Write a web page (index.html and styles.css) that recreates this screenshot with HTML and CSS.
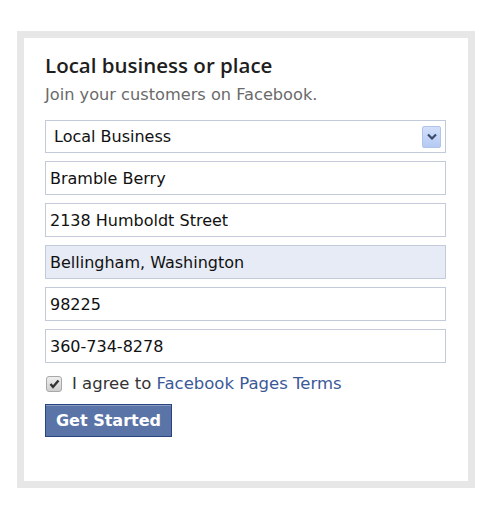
FILE: index.html
```html
<!DOCTYPE html>
<html>
<head>
<meta charset="utf-8">
<link rel="stylesheet" href="styles.css">
</head>
<body>
<div class="frame">
  <div class="panel">
    <h1 class="title">Local business or place</h1>
    <p class="subtitle">Join your customers on Facebook.</p>
    <div class="fields">
      <div class="field select">
        <span>Local Business</span>
        <span class="arrow"><svg width="10" height="7" viewBox="0 0 10 7"><path d="M1 1.5 L5 5.5 L9 1.5" fill="none" stroke="#3a4a6e" stroke-width="2.2"/></svg></span>
      </div>
      <div class="field">Bramble Berry</div>
      <div class="field">2138 Humboldt Street</div>
      <div class="field filled">Bellingham, Washington</div>
      <div class="field">98225</div>
      <div class="field">360-734-8278</div>
    </div>
    <label class="agree">
      <span class="check"><svg width="11" height="10" viewBox="0 0 11 10"><path d="M1.5 5 L4 8 L9.5 1.5" fill="none" stroke="#333" stroke-width="2.4"/></svg></span>
      <span>I agree to <a class="link">Facebook Pages Terms</a></span>
    </label>
    <button class="btn">Get Started</button>
  </div>
</div>
</body>
</html>
```
FILE: styles.css
```css
* { box-sizing: border-box; }
html, body { margin: 0; padding: 0; background: #fff; }
body { font-family: "DejaVu Sans", Tahoma, sans-serif; color: #222; }
.frame {
  margin: 31px 0 0 17px;
  width: 458px;
  height: 457px;
  border: 7px solid #e7e7e7;
  background: #fff;
}
.panel { padding: 13px 21px 0 21px; }
.title {
  margin: 0;
  font-family: "Open Sans", sans-serif;
  font-size: 20.5px;
  font-weight: 600;
  color: #1e1e1e;
  line-height: 28px;
}
.subtitle {
  margin: 6px 0 0 0;
  font-size: 16.2px;
  color: #6a6a6a;
  line-height: 20px;
}
.fields {
  margin-top: 15px;
  display: flex;
  flex-direction: column;
  gap: 8px;
  width: 401px;
}
.field {
  height: 34px;
  border: 1px solid #c3cbdb;
  padding: 0 4px;
  display: flex;
  align-items: center;
  font-size: 16px;
  color: #111;
  background: #fff;
}
.field.filled { background: #e6ebf5; }
.select { justify-content: space-between; padding-left: 8px; padding-right: 4px; height: 33px; }
.arrow {
  width: 19px; height: 22px;
  background: linear-gradient(#d3e0fb, #b5c9f2);
  border: 1px solid #b0c3ea;
  border-radius: 2px;
  display: flex; align-items: center; justify-content: center;
}
.agree {
  display: flex;
  align-items: center;
  gap: 10px;
  margin-top: 11px;
  font-size: 16.5px;
  color: #333;
}
.check {
  width: 16px; height: 16px;
  border: 1px solid #a8a8a8;
  border-radius: 3px;
  background: linear-gradient(#eee, #cfcfcf);
  display: flex; align-items: center; justify-content: center;
  margin-left: 1px;
}
.link { color: #3b5998; text-decoration: none; }
.btn {
  margin-top: 11px;
  width: 127px;
  height: 33px;
  background: #5b74a8;
  border: 1px solid #29447e;
  box-shadow: inset 0 1px 0 #8a9cc2;
  color: #fff;
  font-family: "DejaVu Sans", Tahoma, sans-serif;
  font-weight: bold;
  font-size: 16px;
  padding: 0;
}
```
